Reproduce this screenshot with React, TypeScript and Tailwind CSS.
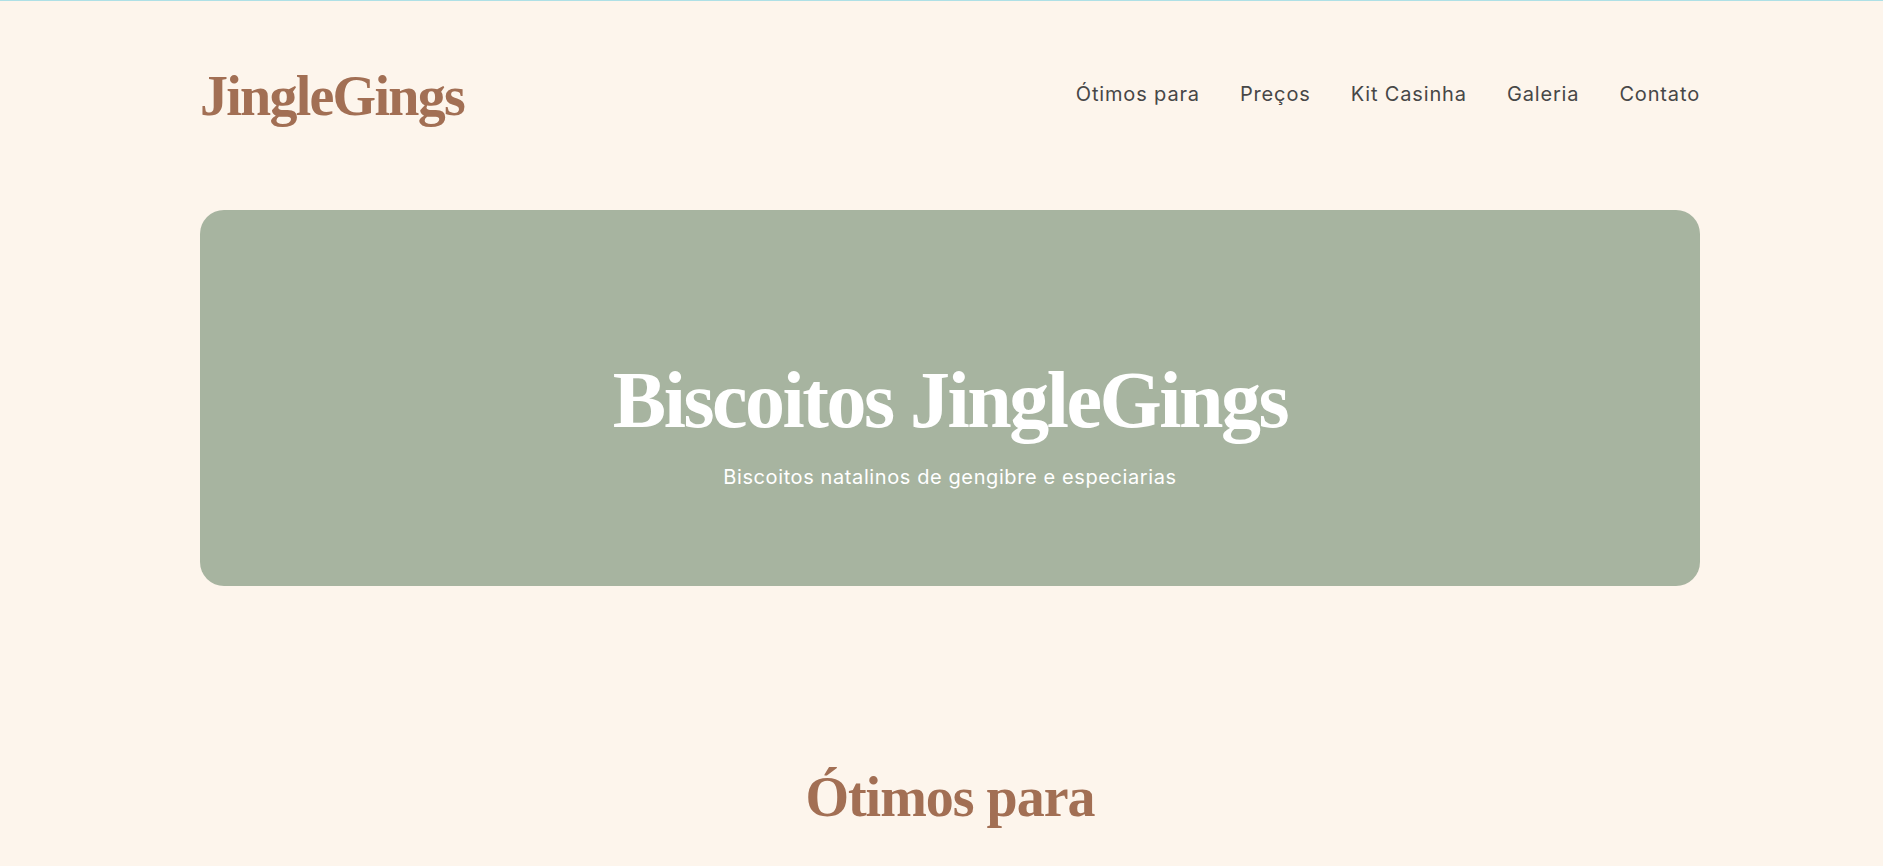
import React from "react";

const serif = { fontFamily: '"Liberation Serif", "Times New Roman", serif' };
const sans = { fontFamily: 'Inter, "Noto Sans", sans-serif' };

export default function App() {
  const nav = ["Ótimos para", "Preços", "Kit Casinha", "Galeria", "Contato"];
  return (
    <div className="min-h-[866px] w-full bg-[#fdf5ec] border-t border-[#aee0e6] overflow-hidden">
      <div className="ml-[200px] w-[1500px]">
        <header className="flex justify-between items-start pt-[67px]">
          <div
            className="text-[56px] leading-none font-bold text-[#a26f54] tracking-[-1.75px]"
            style={serif}
          >
            JingleGings
          </div>
          <nav
            className="flex gap-10 mt-[12px] text-[20px] leading-[28px] tracking-[0.85px] text-[#474747]"
            style={sans}
          >
            {nav.map((n) => (
              <a key={n} href="#">
                {n}
              </a>
            ))}
          </nav>
        </header>

        <section className="mt-[86px] h-[376px] rounded-3xl bg-[#a7b4a0] flex flex-col items-center pt-[150px]">
          <h1
            className="text-[80px] leading-none font-bold text-white tracking-[-2.5px]"
            style={serif}
          >
            Biscoitos JingleGings
          </h1>
          <p
            className="mt-[22px] text-[20px] leading-[30px] tracking-[0.6px] text-white"
            style={sans}
          >
            Biscoitos natalinos de gengibre e especiarias
          </p>
        </section>

        <section className="mt-[183px] flex justify-center">
          <h2
            className="text-[56px] leading-none font-bold text-[#a26f54] tracking-[-1px]"
            style={serif}
          >
            Ótimos para
          </h2>
        </section>
      </div>
    </div>
  );
}
